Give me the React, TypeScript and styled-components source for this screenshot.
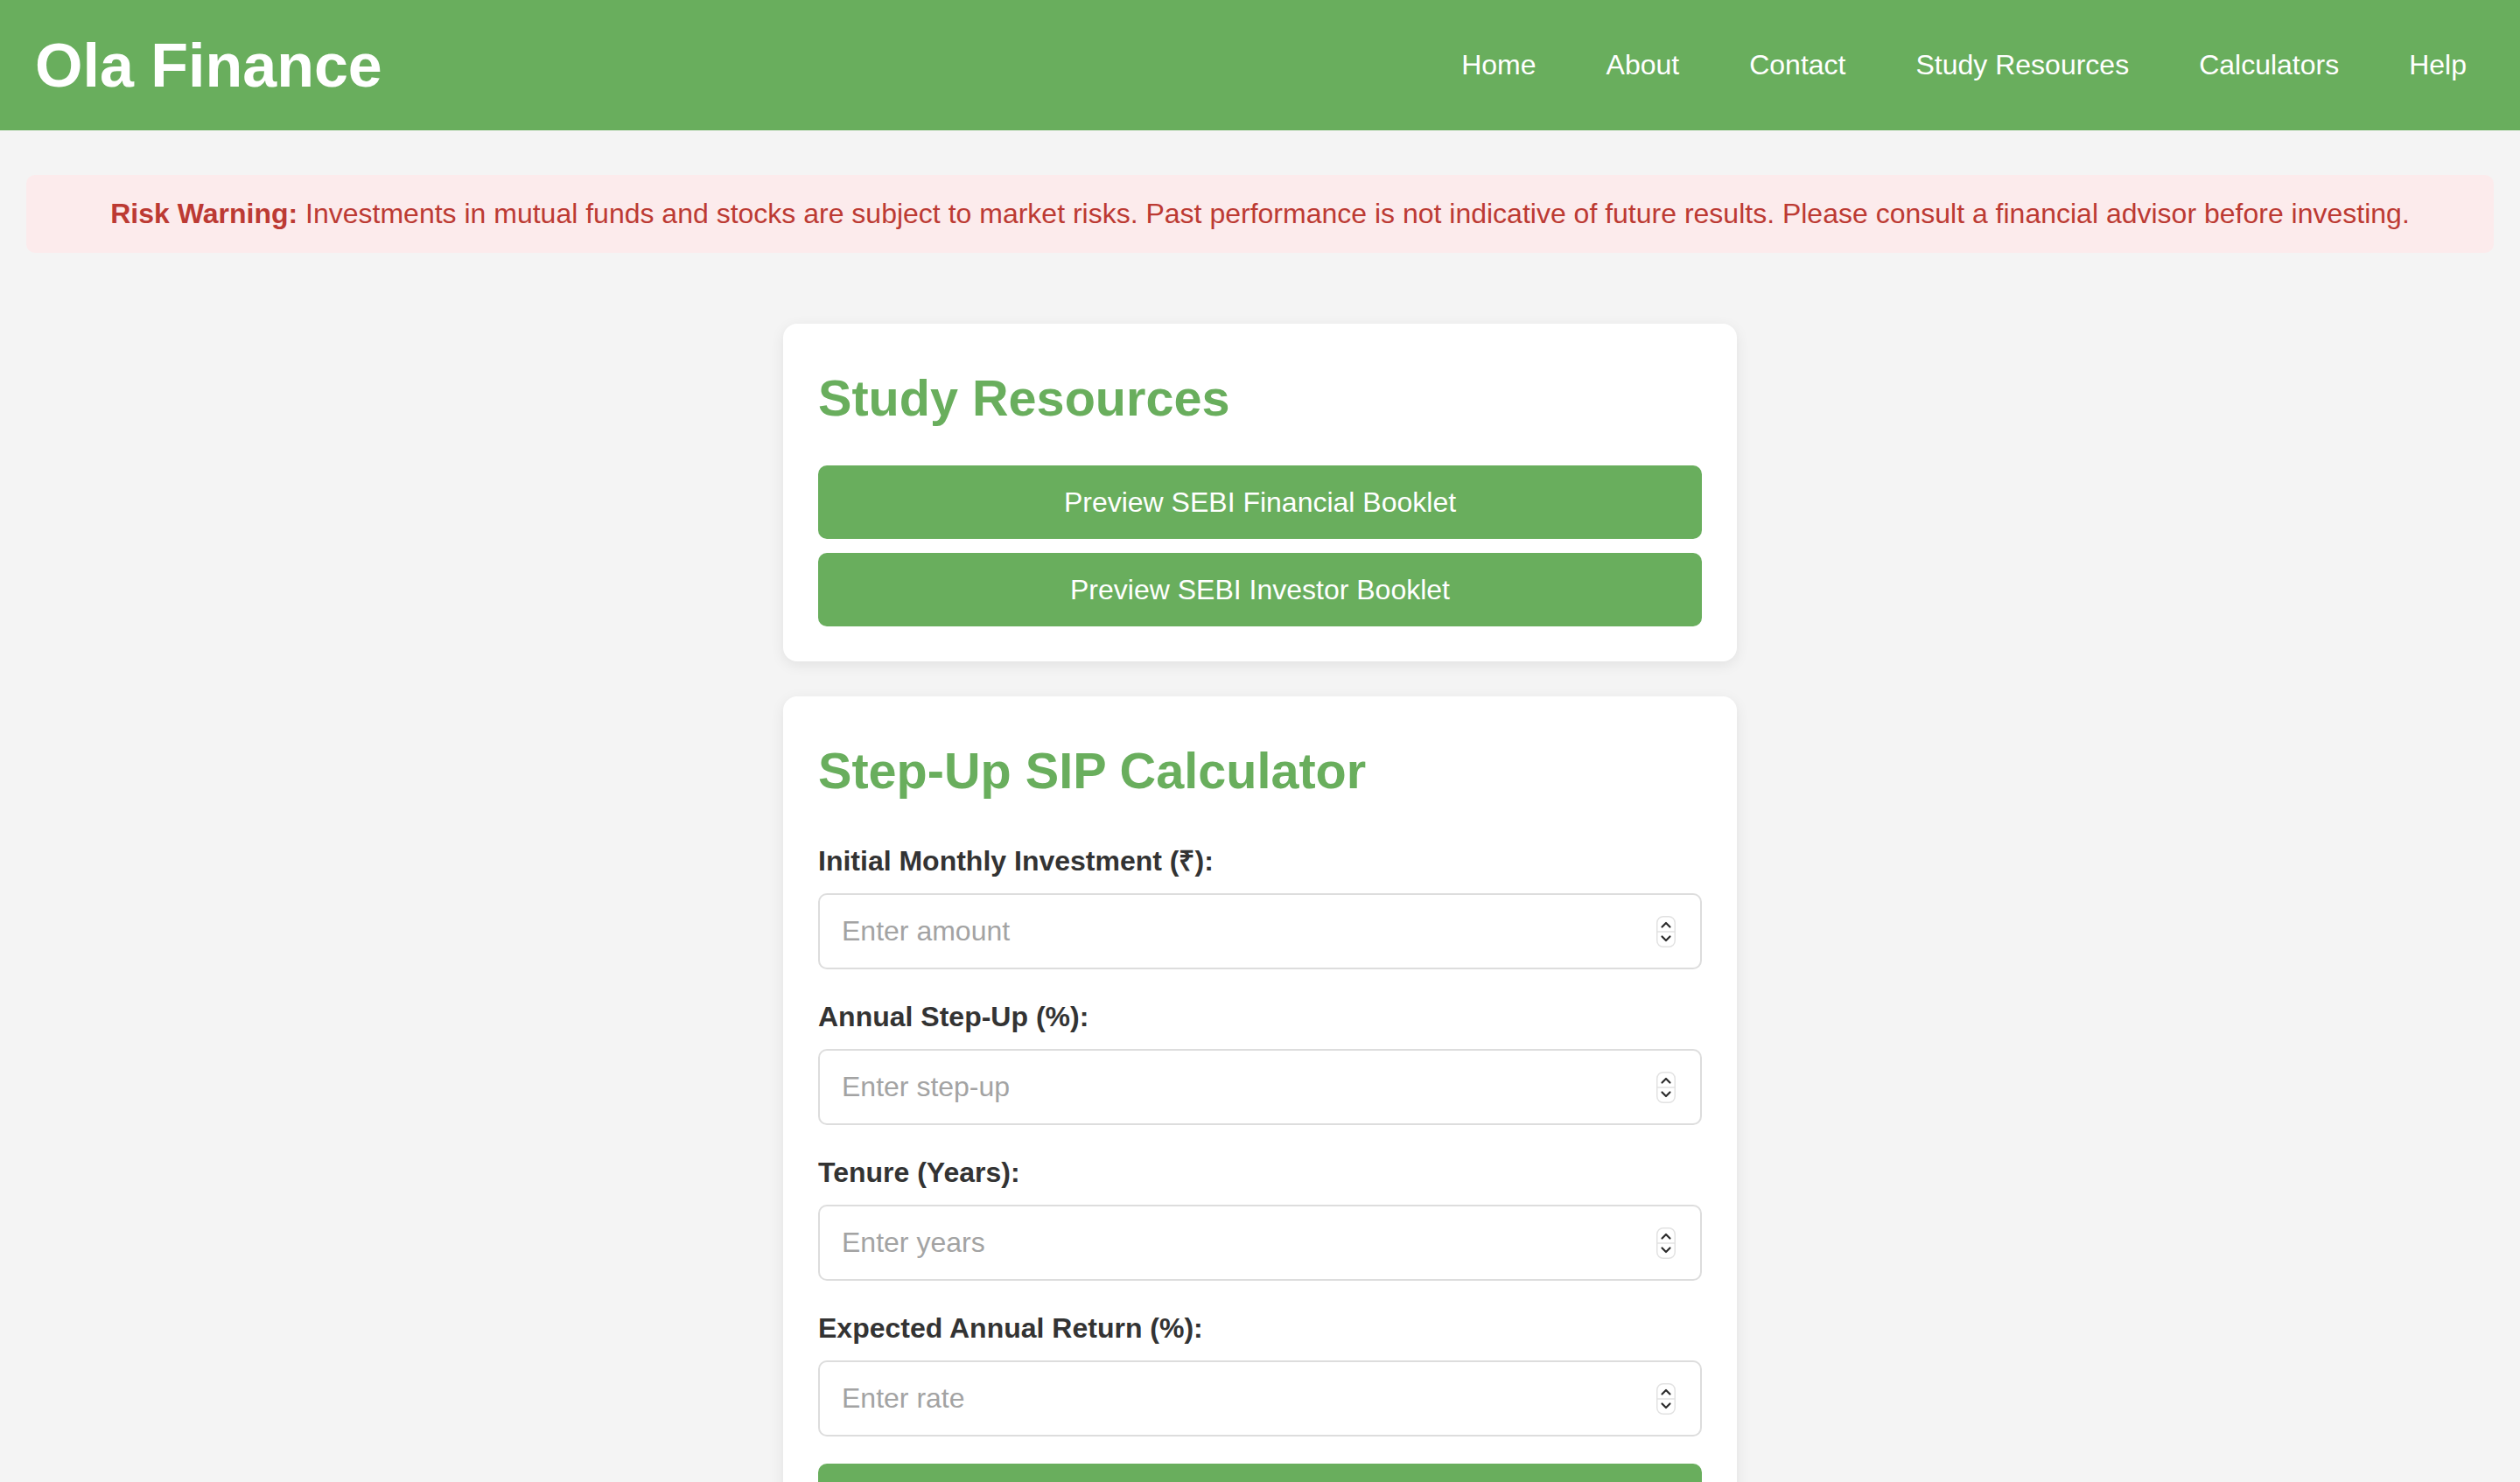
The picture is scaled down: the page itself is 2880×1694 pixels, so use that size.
import React from "react";
import styled, { createGlobalStyle } from "styled-components";

const Colors = {
  green: "#69ae5d",
  pageBg: "#f4f4f4",
  warnBg: "#fcebec",
  warnText: "#bc3a33",
  label: "#333333",
  border: "#dddddd",
  placeholder: "#a3a3a3",
};

const GlobalStyle = createGlobalStyle`
  html, body {
    margin: 0;
    padding: 0;
    background: ${Colors.pageBg};
    font-family: "Liberation Sans", Arial, Helvetica, sans-serif;
  }
  * {
    box-sizing: border-box;
  }
`;

const Header = styled.header`
  height: 149px;
  display: flex;
  align-items: center;
  justify-content: space-between;
  padding: 0 61px 0 40px;
  background: ${Colors.green};
`;

const Logo = styled.h1`
  margin: 0;
  font-size: 70px;
  line-height: 80px;
  font-weight: 700;
  color: #ffffff;
`;

const Nav = styled.nav`
  display: flex;
  gap: 80px;
`;

const NavLink = styled.a`
  font-size: 32px;
  line-height: 37px;
  color: #ffffff;
  text-decoration: none;
`;

const Main = styled.main`
  padding: 51px 30px 60px;
`;

const Warning = styled.div`
  background: ${Colors.warnBg};
  color: ${Colors.warnText};
  border-radius: 10px;
  padding: 26px 30px;
  font-size: 32px;
  line-height: 37px;
  text-align: center;

  strong {
    font-weight: 700;
  }
`;

const Cards = styled.div`
  display: flex;
  flex-direction: column;
  align-items: center;
  gap: 40px;
  margin-top: 81px;
`;

const Card = styled.section`
  width: 1090px;
  padding: 52px 40px 40px;
  background: #ffffff;
  border-radius: 16px;
  box-shadow: 0 4px 16px rgba(0, 0, 0, 0.08);
`;

const CardTitle = styled.h2<{ $gap: number }>`
  margin: 0 0 ${(p) => p.$gap}px;
  font-size: 57.6px;
  line-height: 66px;
  font-weight: 700;
  color: ${Colors.green};
`;

const ButtonStack = styled.div`
  display: flex;
  flex-direction: column;
  gap: 16px;
`;

const GreenButton = styled.button`
  width: 100%;
  height: 84px;
  border: none;
  border-radius: 10px;
  background: ${Colors.green};
  color: #ffffff;
  font-family: inherit;
  font-size: 32px;
  cursor: pointer;
`;

const Form = styled.form`
  display: flex;
  flex-direction: column;
`;

const FieldGroup = styled.div`
  margin-bottom: 36px;

  &:last-of-type {
    margin-bottom: 31px;
  }
`;

const Label = styled.label`
  display: block;
  margin-bottom: 18px;
  font-size: 32px;
  line-height: 37px;
  font-weight: 700;
  color: ${Colors.label};
`;

const InputBox = styled.div`
  height: 87px;
  display: flex;
  align-items: center;
  gap: 12px;
  padding: 0 28px 0 25px;
  border: 2px solid ${Colors.border};
  border-radius: 10px;
  background: #ffffff;
`;

const Input = styled.input`
  flex: 1;
  min-width: 0;
  border: none;
  outline: none;
  padding: 0;
  background: transparent;
  font-family: inherit;
  font-size: 32px;
  line-height: 37px;
  color: ${Colors.label};

  &::placeholder {
    color: ${Colors.placeholder};
  }
`;

const Spinner = () => (
  <svg width="22" height="36" viewBox="0 0 22 36" aria-hidden="true">
    <rect x="0.75" y="0.75" width="20.5" height="34.5" rx="7" fill="#ffffff" stroke="#e2e2e2" strokeWidth="1.5" />
    <line x1="1" y1="18" x2="21" y2="18" stroke="#e2e2e2" strokeWidth="1.5" />
    <path d="M6.5 12.5 L11 8 L15.5 12.5" fill="none" stroke="#2b2b2b" strokeWidth="2.2" strokeLinecap="round" strokeLinejoin="round" />
    <path d="M6.5 23.5 L11 28 L15.5 23.5" fill="none" stroke="#2b2b2b" strokeWidth="2.2" strokeLinecap="round" strokeLinejoin="round" />
  </svg>
);

const navItems = ["Home", "About", "Contact", "Study Resources", "Calculators", "Help"];

const fields = [
  { id: "amount", label: "Initial Monthly Investment (₹):", placeholder: "Enter amount" },
  { id: "stepup", label: "Annual Step-Up (%):", placeholder: "Enter step-up" },
  { id: "years", label: "Tenure (Years):", placeholder: "Enter years" },
  { id: "rate", label: "Expected Annual Return (%):", placeholder: "Enter rate" },
];

export default function App() {
  return (
    <>
      <GlobalStyle />
      <Header>
        <Logo>Ola Finance</Logo>
        <Nav>
          {navItems.map((item) => (
            <NavLink key={item} href="#">
              {item}
            </NavLink>
          ))}
        </Nav>
      </Header>
      <Main>
        <Warning>
          <strong>Risk Warning:</strong> Investments in mutual funds and stocks are subject to
          market risks. Past performance is not indicative of future results. Please consult a
          financial advisor before investing.
        </Warning>
        <Cards>
          <Card>
            <CardTitle $gap={44}>Study Resources</CardTitle>
            <ButtonStack>
              <GreenButton type="button">Preview SEBI Financial Booklet</GreenButton>
              <GreenButton type="button">Preview SEBI Investor Booklet</GreenButton>
            </ButtonStack>
          </Card>
          <Card>
            <CardTitle $gap={52}>Step-Up SIP Calculator</CardTitle>
            <Form onSubmit={(e) => e.preventDefault()}>
              {fields.map((f) => (
                <FieldGroup key={f.id}>
                  <Label htmlFor={f.id}>{f.label}</Label>
                  <InputBox>
                    <Input id={f.id} type="text" inputMode="decimal" placeholder={f.placeholder} />
                    <Spinner />
                  </InputBox>
                </FieldGroup>
              ))}
              <GreenButton type="submit">Calculate</GreenButton>
            </Form>
          </Card>
        </Cards>
      </Main>
    </>
  );
}
